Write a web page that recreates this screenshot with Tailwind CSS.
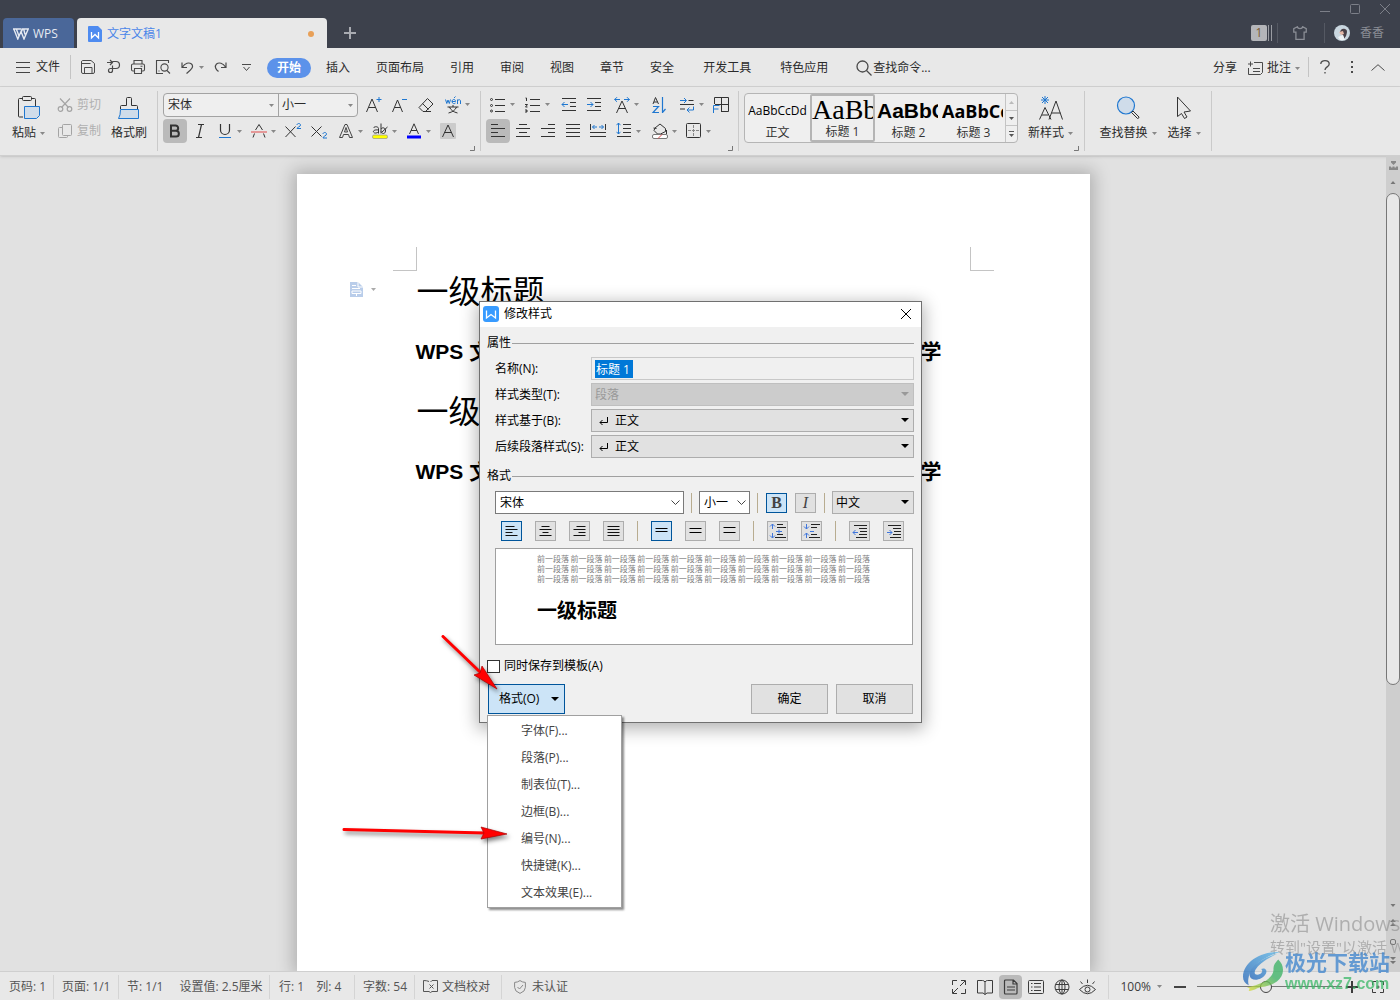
<!DOCTYPE html>
<html lang="zh-CN">
<head>
<meta charset="utf-8">
<title>文字文稿1 - WPS</title>
<script src="https://cdn.jsdelivr.net/npm/@tailwindcss/browser@4"></script>
</head>
<body class="flex h-screen flex-col overflow-hidden bg-[#e1e1e1] font-['Open_Sans','Noto_Sans_CJK_SC',sans-serif] text-xs text-[#2b2b2b]">

<svg class="hidden" aria-hidden="true">
  <symbol id="caret" viewBox="0 0 5 3"><path d="M0 0h5L2.5 3z" fill="currentColor"/></symbol>
  <symbol id="drop" viewBox="0 0 8 4"><path d="M0 0h8L4 4z" fill="currentColor"/></symbol>
  <symbol id="corner" viewBox="0 0 5 5"><path d="M4.500 0v4.500H0" fill="none" stroke="#777"/></symbol>
  <symbol id="plus" viewBox="0 0 12 12"><path d="M6 0v12M0 6h12" stroke="currentColor" stroke-width="2"/></symbol>
</svg>

<!-- Title bar -->
<header class="flex h-12 shrink-0 justify-between bg-[#3d414c]">
  <div class="flex items-end pl-[3px]">
    <button class="flex h-[30px] w-[71px] items-center gap-1 rounded-t bg-[#4a6799] pl-[10px] pt-px text-[#e6eaf2]">
      <svg class="h-3 w-4" viewBox="0 0 16 12" fill="none" stroke="currentColor" stroke-width="1.400"><path d="M0 1h8.500M.8 1l4 10L8 3.500 11 11l4.200-10H9.500l-1 2.500M3.500 1.500L6 8M10.800 1.500l1.200 5"/></svg>
      WPS
    </button>
    <div class="ml-[3px] flex h-[30px] w-[250px] items-center rounded-t bg-[#e8e8e8] pl-[11px] pr-[13px] pt-[2px] text-[#4b86e8]">
      <svg class="h-4 w-[14px]" viewBox="0 0 14 16"><path d="M1 0h9l4 4v11a1 1 0 0 1-1 1H1a1 1 0 0 1-1-1V1a1 1 0 0 1 1-1z" fill="#4e8bf0"/><path d="M3.500 6v6L7 8.500 10.500 12V6" fill="none" stroke="#fff" stroke-width="1.300"/></svg>
      <span class="ml-[5px] grow">文字文稿1</span>
      <span class="size-[6px] rounded-full bg-[#e8a058]"></span>
    </div>
    <button class="mb-[9px] ml-[17px] text-[#a9abb1]" aria-label="新建标签"><svg class="size-3"><use href="#plus"/></svg></button>
  </div>
  <div class="flex flex-col items-end pr-[9px] text-[#7c7f88]">
    <div class="flex h-[18px] items-center gap-5 pr-px">
      <button aria-label="最小化"><svg class="size-[10px]" viewBox="0 0 10 10"><path d="M0 7.500h10" stroke="currentColor"/></svg></button>
      <button aria-label="最大化"><svg class="size-[10px]" viewBox="0 0 10 10"><rect x=".5" y=".5" width="9" height="9" rx="1" fill="none" stroke="currentColor"/></svg></button>
      <button aria-label="关闭"><svg class="size-[10px]" viewBox="0 0 10 10"><path d="M0 0l10 10M10 0L0 10" stroke="currentColor"/></svg></button>
    </div>
    <div class="flex h-[30px] items-center pr-[7px]">
      <span class="flex h-4 w-4 items-center justify-center rounded-xs bg-[#b4b5b9] text-[#7a5a30]">1</span>
      <span class="ml-px h-4 w-1 border-x border-[#9a9ca2]"></span>
      <span class="ml-[5px] h-5 w-px bg-[#555963]"></span>
      <svg class="ml-[15px] size-[14px]" viewBox="0 0 13 13" fill="none" stroke="#8a8d95" stroke-width="1.200"><path d="M4 .7L.7 2.500v3.200h2v6.700h7.600V5.700h2V2.500L9 .7C8.500 3 4.500 3 4 .7z"/></svg>
      <span class="ml-[17px] h-5 w-px bg-[#555963]"></span>
      <svg class="ml-[9px] size-4" viewBox="0 0 16 16"><circle cx="8" cy="8" r="8" fill="#c9d6df"/><path d="M6 8c0-3 2-5 5-4 3 1 2 4 1 7l-2 3-1-4z" fill="#4a4148"/><path d="M5 7l4-1 1 3-3 1z" fill="#e6b9a8"/><path d="M4 12l5-2 2 5-5 0z" fill="#eef2f5"/></svg>
      <span class="ml-[10px] text-[#8a8d95]">香香</span>
    </div>
  </div>
</header>

<!-- Menu bar -->
<nav class="flex h-[39px] shrink-0 items-center border-b border-[#d2d2d2] bg-[#e8e8e8] pl-4">
  <button class="flex items-center gap-[6px]">
    <svg class="h-[11px] w-[14px]" viewBox="0 0 14 11" stroke="#444"><path d="M0 .5h14M0 5.500h14M0 10.500h14"/></svg>文件
  </button>
  <span class="ml-[10px] h-6 w-px bg-[#c4c4c4]"></span>
  <div class="ml-[9px] flex items-center gap-[9px] text-[#4a4a4a]">
    <button aria-label="保存"><svg class="size-4" viewBox="0 0 16 16" fill="none" stroke="currentColor"><path d="M2.500 1.500h8.500l3.500 3v8.500a1.500 1.500 0 0 1-1.500 1.500H3A1.500 1.500 0 0 1 1.500 13V3a1.500 1.500 0 0 1 1-1.500zM4.500 14.500V8.500h7.500v6M2 4.500h8.500"/></svg></button>
    <button aria-label="输出为PDF"><svg class="size-4" viewBox="0 0 16 16" fill="none" stroke="currentColor" stroke-width="1.200"><path d="M2 3.500h5M5 1l2.500 2.500L5 6M7.500 2.500H11a3.500 3.500 0 0 1 0 7H5.500a2 2 0 1 0 2 2V6.500"/></svg></button>
    <button aria-label="打印"><svg class="size-4" viewBox="0 0 16 16" fill="none" stroke="currentColor" stroke-width="1.100"><path d="M4 5V1.500h8V5M4 12H3a1.500 1.500 0 0 1-1.500-1.500v-4A1.500 1.500 0 0 1 3 5h10a1.500 1.500 0 0 1 1.500 1.500v4A1.500 1.500 0 0 1 13 12h-1M4.500 9.500h7v5h-7zM10.500 7.200h2"/></svg></button>
    <button aria-label="打印预览"><svg class="size-4" viewBox="0 0 16 16" fill="none" stroke="currentColor" stroke-width="1.100"><path d="M13.500 4V1.500h-12v13H8"/><circle cx="9.500" cy="8.500" r="3.600"/><path d="M12 11.500l3 3M4 11.500v1"/></svg></button>
    <button class="flex items-center gap-[5px]" aria-label="撤销"><svg class="ml-px size-[13px]" viewBox="0 0 13 13" fill="none" stroke="currentColor" stroke-width="1.200"><path d="M1 1.500v5h5M1.500 6C4 2 8 1 10.500 3c3 3-1 6-5 9.500"/></svg><svg class="h-[3px] w-[5px] text-[#888]"><use href="#caret"/></svg></button>
    <button class="ml-px" aria-label="重做"><svg class="size-[13px]" viewBox="0 0 13 13" fill="none" stroke="currentColor" stroke-width="1.200"><path d="M12 1.500v5H7M11.500 6C9 2 5 1 2.500 3c-2.500 2.500-.5 5.500 2 7.500"/></svg></button>
    <button class="ml-[6px]" aria-label="自定义"><svg class="size-[9px]" viewBox="0 0 9 9" fill="none" stroke="currentColor"><path d="M0 1.500h9M1.500 4l3 3.500 3-3.500"/></svg></button>
  </div>
  <div class="ml-4 flex items-center gap-[26px] whitespace-nowrap pt-[2px]">
    <button class="-mr-[11px] flex h-5 w-11 items-center justify-center rounded-full bg-[#5c92ea] font-bold text-white">开始</button>
    <button>插入</button><button>页面布局</button><button>引用</button><button>审阅</button><button>视图</button><button>章节</button><button>安全</button>
    <button class="ml-[3px]">开发工具</button><button class="ml-[3px]">特色应用</button>
    <button class="ml-[2px] flex items-center gap-px"><svg class="size-4" viewBox="0 0 16 16" fill="none" stroke="#4a4a4a" stroke-width="1.300"><circle cx="6.500" cy="6.500" r="5.500"/><path d="M10.500 10.500l5 5"/></svg>查找命令...</button>
  </div>
  <div class="ml-auto flex items-center whitespace-nowrap pr-[15px]">
    <button class="pt-[2px]">分享</button>
    <button class="ml-[10px] flex items-center gap-1 pt-[2px]"><svg class="size-4" viewBox="0 0 16 16" fill="none" stroke="#4a4a4a"><path d="M7 2.500h8.500v10l-2 2h-12V8M1 4h5M3.500 1.500v5M6 8.500h7M6 11.500h7"/></svg>批注<svg class="h-[3px] w-[5px] text-[#888]"><use href="#caret"/></svg></button>
    <span class="ml-2 h-5 w-px bg-[#c4c4c4]"></span>
    <button class="ml-[11px]" aria-label="帮助"><svg class="h-[14px] w-[10px]" viewBox="0 0 10 14" fill="none" stroke="#4a4a4a" stroke-width="1.300"><path d="M.8 4C.8 1.500 3 .7 5 .7s4.200 1 4.200 3.300C9.200 7 5 6.800 5 10M5 12v1.500"/></svg></button>
    <button class="ml-[21px]" aria-label="更多"><svg class="h-3 w-[2px]" viewBox="0 0 2 12" fill="#4a4a4a"><path d="M0 0h2v2H0zM0 5h2v2H0zM0 10h2v2H0z"/></svg></button>
    <button class="ml-[18px]" aria-label="收起"><svg class="h-[7px] w-[14px]" viewBox="0 0 14 7" fill="none" stroke="#4a4a4a"><path d="M.5 6.500L7 .7l6.500 5.800"/></svg></button>
  </div>
</nav>

<!-- Ribbon -->
<section class="flex h-[69px] shrink-0 border-b border-[#cfcfcf] bg-[#e8e8e8] py-1 shadow-sm whitespace-nowrap">
  <div class="flex w-[158px] shrink-0 border-r border-[#cacaca] pl-3 pt-[5px]">
    <button class="flex flex-col items-center">
      <svg class="h-6 w-6" viewBox="0 0 24 24" fill="none"><path d="M6 2.500H2.500a1 1 0 0 0-1 1V20a1 1 0 0 0 1 1H6M14 2.500h3.500a1 1 0 0 1 1 1V10" stroke="#333"/><rect x="5.500" y=".5" width="9" height="4" rx="1" stroke="#333"/><path d="M7.500 10.500h15v9l-3 3h-12z" fill="#cfdcea" stroke="#1f77d0"/></svg>
      <span class="flex h-[26px] items-center gap-1">粘贴<svg class="h-[3px] w-[5px] text-[#888]"><use href="#caret"/></svg></span>
    </button>
    <div class="ml-3 flex flex-col gap-[10px] pt-px text-[#b0b0b0]">
      <button class="flex items-center gap-1"><svg class="size-4" viewBox="0 0 16 16" fill="none" stroke="#a4a4a4" stroke-width="1.200"><path d="M3 1.500l8.500 9M13 1.500l-8.500 9"/><circle cx="3.500" cy="12" r="2.300"/><circle cx="12.500" cy="12" r="2.300"/></svg>剪切</button>
      <button class="flex items-center gap-1"><svg class="size-4" viewBox="0 0 16 16" fill="none" stroke="#a4a4a4"><rect x="5.500" y="1.500" width="9" height="11" rx="1"/><path d="M5 4.500H2.500a1 1 0 0 0-1 1v8a1 1 0 0 0 1 1h7a1 1 0 0 0 1-1v-1"/></svg>复制</button>
    </div>
    <button class="ml-[10px] flex flex-col items-center">
      <svg class="h-6 w-6" viewBox="0 0 24 24" fill="none"><path d="M3.500 13V10.500a1 1 0 0 1 1-1H9.500v-7a1 1 0 0 1 1-1h3a1 1 0 0 1 1 1v7h5a1 1 0 0 1 1 1V13" stroke="#333"/><path d="M3.500 13.500h18v9h-20q2-3 2-9z" fill="#cfdcea" stroke="#1f77d0"/></svg>
      <span class="flex h-[26px] items-center">格式刷</span>
    </button>
  </div>

  <div class="relative flex w-[323px] shrink-0 flex-col gap-[3px] border-r border-[#cacaca] pl-[5px] pt-[2px]">
    <div class="flex h-[23px] items-center">
      <div class="mr-[3px] flex h-6 w-[195px] rounded border border-[#a3a3a3] bg-[#efefef]">
        <div class="relative w-[115px] border-r border-[#a3a3a3]"><select aria-label="字体" class="h-full w-full appearance-none pl-1 pt-px"><option>宋体</option></select><svg class="pointer-events-none absolute right-1 top-[10px] h-[3px] w-[5px] text-[#888]"><use href="#caret"/></svg></div>
        <div class="relative grow"><select aria-label="字号" class="h-full w-full appearance-none pl-[3px] pt-px"><option>小一</option></select><svg class="pointer-events-none absolute right-1 top-[10px] h-[3px] w-[5px] text-[#888]"><use href="#caret"/></svg></div>
      </div>
      <button class="flex w-[26px] justify-center" aria-label="增大字号"><svg class="size-4" viewBox="0 0 16 16" fill="none"><path d="M.5 15L6 2l5.500 13M2.500 10.500h7" stroke="#333"/><path d="M10.500 2.500h5M13 0v5" stroke="#1f77d0"/></svg></button>
      <button class="flex w-[26px] justify-center" aria-label="减小字号"><svg class="size-4" viewBox="0 0 16 16" fill="none"><path d="M.5 15l5-12 5 12M2.500 10.500h6.500" stroke="#333"/><path d="M10 2.500h5" stroke="#1f77d0"/></svg></button>
      <button class="flex w-[26px] justify-center" aria-label="清除格式"><svg class="size-4" viewBox="0 0 16 16" fill="none" stroke="#333"><path d="M9.500 1.500l5.500 5.500-7.500 7.500H5L1 10.500zM4.500 6.500l6 6M7 14.500h6"/></svg></button>
      <button class="flex w-[34px] items-center gap-1 pl-[6px]" aria-label="拼音指南"><svg class="size-4 overflow-visible" viewBox="0 0 16 16" fill="none"><path d="M.5 2.500L1.800 6.500 3 3l1.300 3.500L5.500 2.500M7 4.500h3.500C10.500 1.500 7 2 7 4.500s3 2.500 3.500 1.500M9 1l1.500-1.500M12.500 7V2.500M12.500 4c1-2 3-1.500 3 0v3" stroke="#1f77d0"/><path d="M2.500 10h11M8 8v2M4.500 10c1 3 4 5 8 6M11.500 10c-1 3-4 5-8 6" stroke="#333"/></svg><svg class="h-[3px] w-[5px] text-[#888]"><use href="#caret"/></svg></button>
    </div>
    <div class="flex h-6 items-center">
      <button class="flex size-6 items-center justify-center rounded bg-[#bababa]" aria-label="加粗"><svg class="size-4" viewBox="0 0 16 16" fill="none" stroke="#333" stroke-width="2"><path d="M4 2.500h4.500a2.500 2.500 0 0 1 0 5.300H4zM4 7.800h5a2.800 2.800 0 0 1 0 5.700H4z"/></svg></button>
      <button class="flex w-[25px] justify-center" aria-label="倾斜"><svg class="size-4" viewBox="0 0 16 16" fill="none" stroke="#333" stroke-width="1.200"><path d="M6 1.500h6M4 14.500h6M9.500 1.500l-3 13"/></svg></button>
      <button class="flex w-[34px] items-center gap-1 pl-[5px]" aria-label="下划线"><svg class="size-4" viewBox="0 0 16 16" fill="none"><path d="M3.500 1v6a4.500 4.500 0 0 0 9 0V1" stroke="#333" stroke-width="1.200"/><path d="M2 14.500h12" stroke="#1f77d0"/></svg><svg class="h-[3px] w-[5px] text-[#888]"><use href="#caret"/></svg></button>
      <button class="flex w-[34px] items-center gap-1 pl-[5px]" aria-label="删除线"><svg class="size-4" viewBox="0 0 16 16" fill="none"><path d="M4.500 7L8 1.500 11.500 7M3.500 10.500L2 14.500M12.500 10.500l1.500 4" stroke="#333"/><path d="M0 9h16" stroke="#e04848"/></svg><svg class="h-[3px] w-[5px] text-[#888]"><use href="#caret"/></svg></button>
      <button class="flex w-[26px] justify-center" aria-label="上标"><svg class="size-4" viewBox="0 0 16 16" fill="none"><path d="M.5 3.500l10 10.500M10.500 3.500L.5 14" stroke="#333"/><path d="M12 2c0-2 3.500-2 3.500 0S12 4 12 5.500h4" stroke="#1f77d0"/></svg></button>
      <button class="flex w-[26px] justify-center" aria-label="下标"><svg class="size-4" viewBox="0 0 16 16" fill="none"><path d="M.5 3.500l10 10M10.500 3.500l-10 10" stroke="#333"/><path d="M12 11c0-2 3.500-2 3.500 0s-3.500 2-3.500 4h4" stroke="#1f77d0"/></svg></button>
      <button class="flex w-[34px] items-center gap-1 pl-[6px]" aria-label="文字效果"><svg class="size-4" viewBox="0 0 16 16" fill="none" stroke="#444"><path d="M1.500 14.500L7 1.500h2l5.500 13h-3l-1-3h-5l-1 3zM6.500 9h3L8 4.500z"/></svg><svg class="h-[3px] w-[5px] text-[#888]"><use href="#caret"/></svg></button>
      <button class="flex w-[34px] items-center gap-1 pl-[6px]" aria-label="突出显示"><svg class="size-4" viewBox="0 0 16 16" fill="none"><rect x=".5" y="12" width="15" height="3.500" rx="1.500" fill="#ff0" stroke="#888" stroke-width=".6"/><path d="M1.500 5c1-2 5-1.500 5 .5v5M6.500 7C3 6.500 1 7.500 1.500 9s4 1.500 5-.5M9 .5v10M9 6c1-2 5-1.500 4.500 2S10 11 9 8.500M10 9l5.500-5" stroke="#333"/></svg><svg class="h-[3px] w-[5px] text-[#888]"><use href="#caret"/></svg></button>
      <button class="flex w-[34px] items-center gap-1 pl-[6px]" aria-label="字体颜色"><svg class="size-4" viewBox="0 0 16 16" fill="none"><path d="M3.500 11L8 .8 12.500 11M5 7.500h6" stroke="#333"/><path d="M1 14h14" stroke="#00f" stroke-width="3"/></svg><svg class="h-[3px] w-[5px] text-[#888]"><use href="#caret"/></svg></button>
      <button class="flex w-7 justify-center" aria-label="字符底纹"><svg class="size-4" viewBox="0 0 16 16" fill="none"><rect width="16" height="16" rx="1" fill="#cbcbcb"/><path d="M2.500 14L8 2l5.500 12M4.500 9.500h7" stroke="#333"/></svg></button>
    </div>
    <svg class="absolute bottom-0 right-[5px] size-[5px]"><use href="#corner"/></svg>
  </div>

  <div class="relative flex w-[258px] shrink-0 flex-col gap-[3px] border-r border-[#cacaca] pl-[5px] pt-[2px]">
    <div class="flex h-[23px] items-center gap-px">
      <button class="flex w-[34px] items-center gap-1 pl-1" aria-label="项目符号"><svg class="size-4" viewBox="0 0 16 16" fill="none" stroke="#333"><path d="M5 2.500h10M5 8.500h10M5 14.500h10"/><circle cx="1.500" cy="2.500" r="1"/><circle cx="1.500" cy="8.500" r="1"/><circle cx="1.500" cy="14" r="1"/></svg><svg class="h-[3px] w-[5px] text-[#888]"><use href="#caret"/></svg></button>
      <button class="flex w-[34px] items-center gap-1 pl-1" aria-label="编号"><svg class="size-4" viewBox="0 0 16 16" fill="none" stroke="#333"><path d="M5 2.500h10M5 8.500h10M5 14.500h10M.5 1h1v3M0 7.500h2.500L.5 10h2M0 13h2v2H0M1 14h1"/></svg><svg class="h-[3px] w-[5px] text-[#888]"><use href="#caret"/></svg></button>
      <button class="ml-px flex w-6 justify-center" aria-label="减少缩进"><svg class="size-4" viewBox="0 0 16 16" fill="none" stroke="#333"><path d="M1 1.500h14M9 5.500h6M9 9.500h6M1 13.500h14"/><path d="M1 7.500h6M3.500 5L1 7.500 3.500 10" stroke="#1f77d0"/></svg></button>
      <button class="flex w-6 justify-center" aria-label="增加缩进"><svg class="size-4" viewBox="0 0 16 16" fill="none" stroke="#333"><path d="M1 1.500h14M9 5.500h6M9 9.500h6M1 13.500h14"/><path d="M1 7.500h6M4.500 5L7 7.500 4.500 10" stroke="#1f77d0"/></svg></button>
      <button class="ml-[2px] flex w-[34px] items-center gap-1 pl-[5px]" aria-label="中文版式"><svg class="size-4" viewBox="0 0 16 16" fill="none" stroke="#333"><path d="M2.500 16L8 4l5.500 12M4.500 11.500h7"/><path d="M.5 2.500H6M3 .2L.7 2.500 3 4.800M10 2.500h5.500M13 .2l2.300 2.300L13 4.800" stroke="#1f77d0"/></svg><svg class="h-[3px] w-[5px] text-[#888]"><use href="#caret"/></svg></button>
      <button class="ml-[3px] flex w-6 justify-center" aria-label="排序"><svg class="size-4" viewBox="0 0 16 16" fill="none"><path d="M2 7l2.500-6.500L7.500 7M3 5h3.500" stroke="#333"/><path d="M2 9.500h5.500L2 15.500h6M11.500 0v15.500l3-3.500" stroke="#1f77d0" stroke-width="1.200"/></svg></button>
      <button class="ml-[2px] flex w-[34px] items-center gap-1 pl-[5px]" aria-label="制表符"><svg class="size-4" viewBox="0 0 16 16" fill="none" stroke="#333"><path d="M9.500 3.500h5M1 7.500h14M1 12h5"/><path d="M1 3.500h6M5 1l2.500 2.500L5 6M14.500 9.500V13H8.500M10.500 10.500L8 13l2.500 2.500" stroke="#1f77d0"/></svg><svg class="h-[3px] w-[5px] text-[#888]"><use href="#caret"/></svg></button>
      <button class="flex w-6 justify-center" aria-label="文字工具"><svg class="size-4" viewBox="0 0 16 16" fill="none" stroke="#333"><path d="M1.500 7V.5h14v14H8M8.500 1v13M2 7.500h13"/><path d="M.5 16V8.500h6M1 12h4.500" stroke="#1f77d0"/></svg></button>
    </div>
    <div class="flex h-6 items-center gap-px">
      <button class="flex size-6 items-center justify-center rounded bg-[#bababa]" aria-label="左对齐"><svg class="size-4" viewBox="0 0 16 16" stroke="#333"><path d="M1 1.500h7M1 5.500h14M1 9.500h7M1 13.500h14"/></svg></button>
      <button class="flex w-6 justify-center" aria-label="居中"><svg class="size-4" viewBox="0 0 16 16" stroke="#333"><path d="M4 1.500h8M1 5.500h14M4 9.500h8M1 13.500h14"/></svg></button>
      <button class="flex w-6 justify-center" aria-label="右对齐"><svg class="size-4" viewBox="0 0 16 16" stroke="#333"><path d="M8 1.500h7M1 5.500h14M8 9.500h7M1 13.500h14"/></svg></button>
      <button class="flex w-6 justify-center" aria-label="两端对齐"><svg class="size-4" viewBox="0 0 16 16" stroke="#333"><path d="M1 1.500h14M1 5.500h14M1 9.500h14M1 13.500h14"/></svg></button>
      <button class="flex w-6 justify-center" aria-label="分散对齐"><svg class="size-4" viewBox="0 0 16 16" fill="none" stroke="#333"><path d="M.5 1v6M15.500 1v6M0 9.500h16M0 13.500h16"/><path d="M2.500 4H7M4.500 2l-2 2 2 2M9 4h4.500M11.500 2l2 2-2 2" stroke="#1f77d0"/></svg></button>
      <button class="flex w-[34px] items-center gap-1 pl-[5px]" aria-label="行距"><svg class="size-4" viewBox="0 0 16 16" fill="none" stroke="#333"><path d="M7 1.500h8M7 5.500h8M7 9.500h8M1 13.500h14"/><path d="M2.500 0v11M.5 2.200L2.500 0l2 2.200M.5 8.800l2 2.200 2-2.200" stroke="#1f77d0"/></svg><svg class="h-[3px] w-[5px] text-[#888]"><use href="#caret"/></svg></button>
      <button class="flex w-[34px] items-center gap-1 pl-[6px]" aria-label="底纹颜色"><svg class="size-4" viewBox="0 0 16 16" fill="none" stroke="#333"><path d="M3 5l5-4 5.500 4.500v3L8.500 11h-3L2 7.500zM1.500 5l3 .5M14.500 7v4"/><rect x=".5" y="11.500" width="15" height="4" rx="1.500" fill="#fff" stroke="#777"/><path d="M6 15.500l4-4" stroke="#e04848"/></svg><svg class="h-[3px] w-[5px] text-[#888]"><use href="#caret"/></svg></button>
      <button class="flex w-[34px] items-center gap-1 pl-[5px]" aria-label="边框"><svg class="size-4" viewBox="0 0 16 16" fill="none" stroke="#333"><rect x=".5" y=".5" width="14" height="14" rx="1"/><path d="M7.500 2v12M2 7.500h12" stroke="#888" stroke-dasharray="3 1"/></svg><svg class="h-[3px] w-[5px] text-[#888]"><use href="#caret"/></svg></button>
    </div>
    <svg class="absolute bottom-0 right-[5px] size-[5px]"><use href="#corner"/></svg>
  </div>

  <div class="relative flex w-[346px] shrink-0 border-r border-[#cacaca] pl-[5px] pt-[2px]">
    <div class="flex h-[50px] w-[274px] overflow-hidden rounded border border-[#b5b5b5] bg-[#efefef] text-black">
      <button class="flex w-[65px] flex-col items-center justify-end overflow-hidden"><span class="font-['Open_Sans'] leading-5">AaBbCcDd</span><span class="mt-[3px] leading-[18px] text-[#333]">正文</span></button>
      <button class="flex w-[65px] flex-col items-start justify-end overflow-hidden rounded-xs border-2 border-[#b5b5b5]"><span class="w-[61px] overflow-hidden text-left font-['Liberation_Serif'] text-[28px] leading-7">AaBb</span><span class="self-center leading-4 text-[#333]">标题 1</span></button>
      <button class="flex w-[65px] flex-col items-start justify-end overflow-hidden pl-[2px]"><span class="w-[61px] overflow-hidden text-left font-['Liberation_Sans'] text-[21px] font-bold leading-6">AaBbC</span><span class="mt-px self-center leading-[18px] text-[#333]">标题 2</span></button>
      <button class="flex w-[65px] flex-col items-start justify-end overflow-hidden pl-[2px]"><span class="w-[61px] overflow-hidden text-left font-['Open_Sans'] text-[18px] font-bold leading-6">AaBbCc</span><span class="mt-px self-center leading-[18px] text-[#333]">标题 3</span></button>
      <div class="flex w-3 flex-col border-l border-[#c4c4c4] text-[#555]">
        <button class="flex h-4 items-center justify-center text-[#bbb]" aria-label="上一行"><svg class="h-[3px] w-[5px] rotate-180"><use href="#caret"/></svg></button>
        <button class="flex h-4 items-center justify-center border-y border-[#c4c4c4]" aria-label="下一行"><svg class="h-[3px] w-[5px]"><use href="#caret"/></svg></button>
        <button class="flex h-4 flex-col items-center justify-center gap-[2px]" aria-label="全部样式"><span class="h-px w-[5px] bg-[#555]"></span><svg class="h-[3px] w-[5px]"><use href="#caret"/></svg></button>
      </div>
    </div>
    <button class="ml-[10px] flex flex-col items-center pt-[3px]">
      <svg class="h-6 w-6" viewBox="0 0 24 24" fill="none" stroke="#333"><path d="M.5 23.500L6 11.500l6 12M3 19h6M10 23.500L17 5l6.500 18.500M12.500 17h9"/><path d="M6 0v8M2 4h8M3 1l6 6M9 1L3 7" stroke="#1f77d0"/></svg>
      <span class="flex h-[26px] items-center gap-1">新样式<svg class="h-[3px] w-[5px] text-[#888]"><use href="#caret"/></svg></span>
    </button>
    <svg class="absolute bottom-0 right-[5px] size-[5px]"><use href="#corner"/></svg>
  </div>

  <div class="flex w-[127px] shrink-0 justify-center gap-[11px] border-r border-[#cacaca] pl-1 pt-[5px]">
    <button class="flex flex-col items-center">
      <svg class="h-6 w-6" viewBox="0 0 24 24" fill="none"><circle cx="10" cy="9.500" r="8.500" fill="#cfdcea" stroke="#1f77d0" stroke-width="1.200"/><path d="M15.500 16.500l1.500-1.500 6 6q0 1.500-1.500 1.500z" stroke="#333"/></svg>
      <span class="flex h-[26px] items-center gap-1">查找替换<svg class="h-[3px] w-[5px] text-[#888]"><use href="#caret"/></svg></span>
    </button>
    <button class="flex flex-col items-center">
      <svg class="h-6 w-6" viewBox="0 0 24 24" fill="none" stroke="#333"><path d="M5.500 1v19.500l4-3 3 5 2.500-1.500-3-5 6.500-1z"/></svg>
      <span class="flex h-[26px] items-center gap-1">选择<svg class="h-[3px] w-[5px] text-[#888]"><use href="#caret"/></svg></span>
    </button>
  </div>
</section>

<!-- Document area -->
<main class="relative flex min-h-0 grow">
  <div class="min-w-0 grow overflow-hidden pt-[18px]">
    <article class="mx-auto h-full w-[793px] bg-white px-24 pt-[73px] text-black shadow-[0_0_16px_4px_rgba(0,0,0,0.22)]">
      <div class="flex justify-between">
        <span class="size-6 border-b border-r border-[#c4c4c4]"></span>
        <span class="size-6 border-b border-l border-[#c4c4c4]"></span>
      </div>
      <div class="relative pl-6">
        <button class="absolute -left-[43px] top-[11px] flex items-center gap-2" aria-label="段落选项">
          <svg class="h-[15px] w-[13px]" viewBox="0 0 13 15"><path d="M0 0h8l5 5v10H0z" fill="#b9cdea"/><path d="M8 0v5h5M2 3.500h4M2 6.500h8M2 9h9v2.500H2zM6.500 12v2" fill="none" stroke="#fff"/></svg>
          <svg class="h-[3px] w-[5px] text-[#aaa]"><use href="#caret"/></svg>
        </button>
        <h1 class="h-[60px] pt-1 text-[32px] leading-8">一级标题</h1>
        <h2 class="-ml-px flex h-[60px] w-[526px] justify-between pt-[9px] font-['Liberation_Sans','Noto_Sans_CJK_SC',sans-serif] text-[21px] font-bold leading-6"><span>WPS 文</span><span>学</span></h2>
        <h1 class="h-[60px] pt-1 text-[32px] leading-8">一级标题</h1>
        <h2 class="-ml-px flex h-[60px] w-[526px] justify-between pt-[9px] font-['Liberation_Sans','Noto_Sans_CJK_SC',sans-serif] text-[21px] font-bold leading-6"><span>WPS 文</span><span>学</span></h2>
      </div>
    </article>
  </div>
  <aside class="flex w-[14px] shrink-0 flex-col items-center bg-[#cecece] text-[#777]">
    <svg class="mt-[5px] h-[9px] w-[9px]" viewBox="0 0 9 9" fill="#888"><path d="M2 0h5v1.500L4.500 4 2 1.500zM0 5.500h2v1h1.500v-1h2v1H7v-1h2V9H0z"/></svg>
    <svg class="mt-[11px] h-[3px] w-[6px] rotate-180"><use href="#caret"/></svg>
    <div class="mt-[9px] h-[492px] w-full rounded-full border border-[#777] bg-[#e8e8e8]"></div>
    <div class="mb-[7px] mt-auto flex flex-col items-center">
      <svg class="h-[3px] w-[6px]"><use href="#caret"/></svg>
      <svg class="mt-3 h-[7px] w-[6px]" viewBox="0 0 6 7" fill="currentColor"><path d="M3 0l3 3H0zM3 4l3 3H0z"/></svg>
      <span class="mt-[13px] size-[6px] rounded-xs border border-[#777]"></span>
      <svg class="mt-3 h-[7px] w-[6px]" viewBox="0 0 6 7" fill="currentColor"><path d="M3 3l3-3H0zM3 7l3-3H0z"/></svg>
    </div>
  </aside>

  <!-- Modify-style dialog -->
  <div role="dialog" aria-labelledby="dlg-title" class="absolute left-1/2 top-[145px] -ml-[221px] w-[443px] border border-[#707070] bg-[#f0f0f0] pb-2 text-black shadow-[0_4px_16px_2px_rgba(0,0,0,0.3)]">
    <div class="flex h-[25px] items-center bg-white pb-px pl-[3px] pr-[10px]">
      <svg class="size-4" viewBox="0 0 16 16"><rect width="16" height="16" rx="3" fill="#389bff"/><path d="M3.500 4.500v7.500L8 8.500l4.500 3.500V4.500" fill="none" stroke="#fff" stroke-width="1.300"/></svg>
      <span id="dlg-title" class="ml-[5px] grow">修改样式</span>
      <button aria-label="关闭"><svg class="size-[10px]" viewBox="0 0 10 10"><path d="M0 0l10 10M10 0L0 10" stroke="#000"/></svg></button>
    </div>
    <div class="flex flex-col pl-[7px] pr-[7px] pt-[6px]">
      <div class="flex h-5 items-center gap-px">属性<span class="h-px grow bg-[#a0a0a0]"></span></div>
      <div class="mt-1 grid grid-cols-[96px_1fr] items-center gap-y-[3px] pl-2 whitespace-nowrap">
        <label for="f-name">名称(N):</label>
        <div class="flex h-[23px] items-center border border-[#c8c8c8] p-px">
          <input id="f-name" value="标题 1" class="ml-[2px] h-[18px] w-[38px] bg-[#0078d7] pl-px text-white outline-none">
        </div>
        <label for="f-type">样式类型(T):</label>
        <div class="relative h-[23px]"><select id="f-type" disabled class="h-full w-full appearance-none border border-[#bfbfbf] bg-[#cccccc] pl-[3px] text-[#9a9a9a] opacity-100"><option>段落</option></select><svg class="pointer-events-none absolute right-[5px] top-[9px] h-1 w-2 text-[#999]"><use href="#drop"/></svg></div>
        <label for="f-base">样式基于(B):</label>
        <div class="relative h-[23px]"><select id="f-base" class="h-full w-full appearance-none border border-[#adadad] bg-[#e1e1e1] pl-[23px]"><option>正文</option></select><svg class="pointer-events-none absolute left-2 top-2 size-[9px]" viewBox="0 0 9 9" fill="none" stroke="#000"><path d="M8.500 0v5.500H1M3.500 3L1 5.500 3.500 8"/></svg><svg class="pointer-events-none absolute right-[5px] top-[9px] h-1 w-2"><use href="#drop"/></svg></div>
        <label for="f-next">后续段落样式(S):</label>
        <div class="relative h-[23px]"><select id="f-next" class="h-full w-full appearance-none border border-[#adadad] bg-[#e1e1e1] pl-[23px]"><option>正文</option></select><svg class="pointer-events-none absolute left-2 top-2 size-[9px]" viewBox="0 0 9 9" fill="none" stroke="#000"><path d="M8.500 0v5.500H1M3.500 3L1 5.500 3.500 8"/></svg><svg class="pointer-events-none absolute right-[5px] top-[9px] h-1 w-2"><use href="#drop"/></svg></div>
      </div>
      <div class="mt-2 flex h-5 items-center gap-px">格式<span class="h-px grow bg-[#a0a0a0]"></span></div>
      <div class="mt-[5px] flex items-center pl-2">
        <div class="relative h-[23px] w-[189px]"><select aria-label="字体" class="h-full w-full appearance-none border border-[#7a7a7a] bg-white pl-1"><option>宋体</option></select><svg class="pointer-events-none absolute right-1 top-[9px] h-[6px] w-[9px]" viewBox="0 0 9 6" fill="none" stroke="#444"><path d="M.5.5l4 4 4-4"/></svg></div>
        <span class="ml-[7px] h-5 w-px bg-[#b8ac90]"></span>
        <div class="relative ml-[7px] h-[23px] w-[51px]"><select aria-label="字号" class="h-full w-full appearance-none border border-[#7a7a7a] bg-white pl-1"><option>小一</option></select><svg class="pointer-events-none absolute right-1 top-[9px] h-[6px] w-[9px]" viewBox="0 0 9 6" fill="none" stroke="#444"><path d="M.5.5l4 4 4-4"/></svg></div>
        <span class="ml-[7px] h-5 w-px bg-[#b8ac90]"></span>
        <button class="ml-2 h-5 w-[21px] border border-[#00559b] bg-[#cce4f7] font-['Liberation_Serif'] text-base font-bold leading-4 text-[#444]">B</button>
        <button class="ml-2 h-5 w-[21px] border border-[#adadad] bg-[#e1e1e1] font-['Liberation_Serif'] text-base italic leading-4 text-[#444]">I</button>
        <span class="ml-2 h-5 w-px bg-[#b8ac90]"></span>
        <div class="relative ml-[7px] h-[23px] grow"><select aria-label="语言" class="h-full w-full appearance-none border border-[#adadad] bg-[#e1e1e1] pl-[3px]"><option>中文</option></select><svg class="pointer-events-none absolute right-[5px] top-[9px] h-1 w-2"><use href="#drop"/></svg></div>
      </div>
      <div class="mt-[7px] flex items-center gap-[13px] pl-[14px]">
        <button class="flex h-5 w-[21px] items-center justify-center border border-[#00559b] bg-[#cce4f7]" aria-label="左对齐"><svg class="h-[14px] w-[13px]" viewBox="0 0 13 14" stroke="#111"><path d="M.5 2.500h9M.5 5.500h12M.5 8.500h7M.5 11.500h12"/></svg></button>
        <button class="flex h-5 w-[21px] items-center justify-center border border-[#adadad] bg-[#e1e1e1]" aria-label="居中"><svg class="h-[14px] w-[13px]" viewBox="0 0 13 14" stroke="#111"><path d="M2.500 2.500h8M.5 5.500h12M3.500 8.500h6M.5 11.500h12"/></svg></button>
        <button class="flex h-5 w-[21px] items-center justify-center border border-[#adadad] bg-[#e1e1e1]" aria-label="右对齐"><svg class="h-[14px] w-[13px]" viewBox="0 0 13 14" stroke="#111"><path d="M3.500 2.500h9M.5 5.500h12M5.500 8.500h7M.5 11.500h12"/></svg></button>
        <button class="flex h-5 w-[21px] items-center justify-center border border-[#adadad] bg-[#e1e1e1]" aria-label="两端对齐"><svg class="h-[14px] w-[13px]" viewBox="0 0 13 14" stroke="#111"><path d="M.5 2.500h12M.5 5.500h12M.5 8.500h12M.5 11.500h12"/></svg></button>
        <span class="h-5 w-px bg-[#b8ac90]"></span>
        <button class="flex h-5 w-[21px] items-center justify-center border border-[#00559b] bg-[#cce4f7]" aria-label="单倍行距"><svg class="h-[14px] w-[13px]" viewBox="0 0 13 14" stroke="#000"><path d="M.5 4.500h12M.5 7.500h12"/></svg></button>
        <button class="flex h-5 w-[21px] items-center justify-center border border-[#adadad] bg-[#e1e1e1]" aria-label="1.5倍行距"><svg class="h-[14px] w-[13px]" viewBox="0 0 13 14" stroke="#000"><path d="M.5 4.500h12M.5 8.500h12"/></svg></button>
        <button class="flex h-5 w-[21px] items-center justify-center border border-[#adadad] bg-[#e1e1e1]" aria-label="两倍行距"><svg class="h-[14px] w-[13px]" viewBox="0 0 13 14" stroke="#000"><path d="M.5 3.500h12M.5 8.500h12"/></svg></button>
        <span class="h-5 w-px bg-[#b8ac90]"></span>
        <button class="flex h-5 w-[21px] items-center justify-center border border-[#adadad] bg-[#e1e1e1]" aria-label="增大段间距"><svg class="h-4 w-[17px]" viewBox="0 0 17 16" fill="none" stroke="#222"><path d="M8 1.500h6M8 4.500h9M8 11.500h6M6 14.500h11"/><path d="M3.500 1v5M1 3.500L3.500 1 6 3.500M3.500 10v5M1 12.500L3.500 15 6 12.500M7 8.500h6M10 6.500v4" stroke="#3f76dc"/></svg></button>
        <button class="flex h-5 w-[21px] items-center justify-center border border-[#adadad] bg-[#e1e1e1]" aria-label="减小段间距"><svg class="h-4 w-[17px]" viewBox="0 0 17 16" fill="none" stroke="#222"><path d="M8 1.500h9M8 4.500h6M8 11.500h6M6 14.500h11"/><path d="M3.500 1v5M1 3.500L3.500 6 6 3.500M3.500 10v5M1 12.500L3.500 10 6 12.500M7 8.500h4" stroke="#3f76dc"/></svg></button>
        <span class="h-5 w-px bg-[#b8ac90]"></span>
        <button class="flex h-5 w-[21px] items-center justify-center border border-[#adadad] bg-[#e1e1e1]" aria-label="减少缩进"><svg class="h-4 w-[15px]" viewBox="0 0 15 16" fill="none" stroke="#222"><path d="M2 2.500h13M7 5.500h8M8 8.500h7M7 11.500h8M4 14.500h11"/><path d="M1 9.500h5M3.500 7L1 9.500 3.500 12" stroke="#3f76dc"/></svg></button>
        <button class="flex h-5 w-[21px] items-center justify-center border border-[#adadad] bg-[#e1e1e1]" aria-label="增加缩进"><svg class="h-4 w-[15px]" viewBox="0 0 15 16" fill="none" stroke="#222"><path d="M2 2.500h13M7 5.500h8M8 8.500h7M7 11.500h8M4 14.500h11"/><path d="M1 9.500h5M3.500 7L6 9.500 3.500 12" stroke="#3f76dc"/></svg></button>
      </div>
      <div class="ml-2 mr-px mt-[7px] h-[97px] border border-[#a0a0a0] bg-white pl-[41px] pr-[42px] pt-[5px]">
        <div class="flex flex-col text-[8px] leading-[10px] text-[#808080]">
          <p class="flex justify-between"><span>前一段落</span><span>前一段落</span><span>前一段落</span><span>前一段落</span><span>前一段落</span><span>前一段落</span><span>前一段落</span><span>前一段落</span><span>前一段落</span><span>前一段落</span></p>
          <p class="flex justify-between"><span>前一段落</span><span>前一段落</span><span>前一段落</span><span>前一段落</span><span>前一段落</span><span>前一段落</span><span>前一段落</span><span>前一段落</span><span>前一段落</span><span>前一段落</span></p>
          <p class="flex justify-between"><span>前一段落</span><span>前一段落</span><span>前一段落</span><span>前一段落</span><span>前一段落</span><span>前一段落</span><span>前一段落</span><span>前一段落</span><span>前一段落</span><span>前一段落</span></p>
        </div>
        <p class="mt-[13px] text-xl font-bold leading-7">一级标题</p>
      </div>
      <label class="mt-[11px] flex h-5 items-center gap-1"><input type="checkbox" class="size-[13px] appearance-none border border-[#333] bg-white">同时保存到模板(A)</label>
      <div class="mt-2 flex gap-2 pl-px pr-px">
        <button class="mr-auto flex h-[30px] w-[77px] items-center justify-between border border-[#00559b] bg-[#cce4f7] pl-[10px] pr-[5px]">格式(O)<svg class="h-1 w-2"><use href="#drop"/></svg></button>
        <button class="h-[30px] w-[77px] border border-[#adadad] bg-[#e1e1e1]">确定</button>
        <button class="h-[30px] w-[77px] border border-[#adadad] bg-[#e1e1e1]">取消</button>
      </div>
    </div>

    <div role="menu" class="absolute left-[7px] top-[413px] flex w-[135px] flex-col border border-[#a0a0a0] bg-white py-px text-[#444] shadow-[2px_2px_2px_rgba(0,0,0,0.45)]">
      <button role="menuitem" class="h-[27px] pl-[33px] text-left">字体(F)...</button>
      <button role="menuitem" class="h-[27px] pl-[33px] text-left">段落(P)...</button>
      <button role="menuitem" class="h-[27px] pl-[33px] text-left">制表位(T)...</button>
      <button role="menuitem" class="h-[27px] pl-[33px] text-left">边框(B)...</button>
      <button role="menuitem" class="h-[27px] pl-[33px] text-left">编号(N)...</button>
      <button role="menuitem" class="h-[27px] pl-[33px] text-left">快捷键(K)...</button>
      <button role="menuitem" class="h-[27px] pl-[33px] text-left">文本效果(E)...</button>
    </div>

    <!-- Pointer arrows -->
    <svg class="pointer-events-none absolute -left-[140px] top-[328px] h-[220px] w-[180px] drop-shadow-[2px_3px_2px_rgba(0,0,0,0.5)]" viewBox="340 630 180 220" fill="#f00" stroke="#f00">
      <path d="M443 636.500L480 672" stroke-width="3" stroke-linecap="round"/><path d="M497 689l-23-14 6-2 2-7z" stroke="#a00" stroke-width=".7"/>
      <path d="M344 829.500L485 833" stroke-width="3" stroke-linecap="round"/><path d="M507 834l-26 5 3-6-3-6z" stroke="#a00" stroke-width=".7"/>
    </svg>
  </div>
</main>

<!-- Status bar -->
<footer class="flex h-[29px] shrink-0 items-center border-t border-[#cfcfcf] bg-[#e8e8e8] pl-[9px] pr-4 pt-px whitespace-nowrap text-[#555]">
  <span class="w-11">页码: 1</span>
  <span class="flex h-6 w-[65px] items-center border-l border-[#d4d4d4] pl-2">页面: 1/1</span>
  <span class="flex h-6 w-[151px] items-center gap-4 border-l border-[#d4d4d4] pl-2"><span>节: 1/1</span><span>设置值: 2.5厘米</span></span>
  <span class="flex h-6 w-[85px] items-center gap-3 border-l border-[#d4d4d4] pl-[9px]"><span>行: 1</span><span>列: 4</span></span>
  <span class="flex h-6 w-[60px] items-center border-l border-[#d4d4d4] pl-2">字数: 54</span>
  <button class="flex h-6 w-[87px] items-center gap-1 border-l border-[#d4d4d4] pl-2"><svg class="h-[13px] w-[15px]" viewBox="0 0 15 13" fill="none" stroke="#555"><path d="M6 1.500q-2-1-5.500-1v11h5.500l1.500 1 1.500-1h5.500V.5H9L7.500 2M6.500 4.500l4 4M10.500 4.500l-4 4"/></svg>文档校对</button>
  <button class="flex h-6 items-center gap-[6px] border-l border-[#d4d4d4] pl-3"><svg class="h-[14px] w-3" viewBox="0 0 12 14" fill="none" stroke="#888"><path d="M6 .6q2.500 1.800 5.400 1.800v5q0 4-5.400 6Q.6 11.400.6 7.400v-5Q3.500 2.400 6 .6zM3.500 7l2 2 3.500-4"/></svg>未认证</button>
  <div class="ml-auto flex items-center text-[#3c3c3c]">
    <button aria-label="全屏"><svg class="size-4" viewBox="0 0 16 16" fill="none" stroke="currentColor"><path d="M1.500 6V1.500H6M10 1.500h4.500V6M14.500 10v4.500H10M6 14.500H1.500V10M9 7l5-5M7 9l-5 5"/></svg></button>
    <button class="ml-[10px]" aria-label="阅读"><svg class="size-4" viewBox="0 0 16 16" fill="none" stroke="currentColor"><path d="M8 3v12.500M8 3Q7 1.500 5.500 1.500h-5v12.500h5.500L8 15.500 10 14h5.500V1.500h-5Q9 1.500 8 3z"/></svg></button>
    <button class="ml-[6px] flex h-6 w-[23px] items-center justify-center rounded bg-[#bababa]" aria-label="页面视图"><svg class="size-4" viewBox="0 0 16 16" fill="none" stroke="currentColor" stroke-width="1.200"><path d="M2.500 1h8l3.500 3.500V14a1 1 0 0 1-1 1H2.500a1 1 0 0 1-1-1V2a1 1 0 0 1 1-1zM10 1v4h4M4 8h8M4 11h8"/></svg></button>
    <button class="ml-[6px]" aria-label="大纲"><svg class="size-4" viewBox="0 0 16 16" fill="none" stroke="currentColor"><rect x=".5" y="1.500" width="15" height="13" rx="1"/><path d="M3 4.500h1.500M6 4.500h7M3 8h1.500M6 8h7M3 11.500h1.500M6 11.500h7"/></svg></button>
    <button class="ml-[10px]" aria-label="Web版式"><svg class="size-4" viewBox="0 0 16 16" fill="none" stroke="currentColor"><circle cx="8" cy="8" r="7"/><ellipse cx="8" cy="8" rx="3" ry="7"/><path d="M8 1v14M1.500 5.500h13M1.500 10.500h13"/></svg></button>
    <button class="ml-[9px]" aria-label="护眼模式"><svg class="h-4 w-[17px]" viewBox="0 0 17 16" fill="none" stroke="currentColor"><path d="M.5 10.500q8-8.500 16 0-8 8.500-16 0zM8.500 4V.5M3.500 5L1.500 2.500M13.500 5l2-2.500"/><circle cx="8.500" cy="10.500" r="2.500"/></svg></button>
    <span class="ml-3 h-6 w-px bg-[#d4d4d4]"></span>
    <button class="ml-[11px] flex items-center gap-[6px]">100%<svg class="h-[3px] w-[5px] text-[#888]"><use href="#caret"/></svg></button>
    <button class="ml-3" aria-label="缩小"><svg class="h-[2px] w-3"><rect width="12" height="2" fill="#444"/></svg></button>
    <input type="range" aria-label="缩放" min="0" max="100" value="47" class="ml-[11px] h-3 w-[145px] appearance-none bg-[linear-gradient(#777,#777)] bg-[length:100%_1px] bg-center bg-no-repeat [&::-webkit-slider-thumb]:size-3 [&::-webkit-slider-thumb]:appearance-none [&::-webkit-slider-thumb]:rounded-full [&::-webkit-slider-thumb]:border [&::-webkit-slider-thumb]:border-[#444] [&::-webkit-slider-thumb]:bg-[#e8e8e8]">
    <button class="ml-1" aria-label="放大"><svg class="size-3"><use href="#plus"/></svg></button>
    <button class="ml-[14px]" aria-label="适应窗口"><svg class="size-3" viewBox="0 0 12 12" fill="none" stroke="currentColor"><path d="M.5 4V.5H4M8 .5h3.500V4M11.500 8v3.500H8M4 11.500H.5V8M6 4.500v3M4.500 6h3"/></svg></button>
  </div>
</footer>

<!-- Watermarks over the lower right corner -->
<div class="pointer-events-none fixed bottom-[42px] right-0 w-[130px] overflow-hidden whitespace-nowrap text-[#8c8c8c]/60">
  <p class="text-xl leading-6">激活 Windows</p>
  <p class="text-[15px] leading-[22px]">转到"设置"以激活 Windows。</p>
</div>
<div class="pointer-events-none fixed bottom-[7px] right-[10px] flex items-center gap-px whitespace-nowrap opacity-75">
  <svg class="h-10 w-[42px]" viewBox="0 0 42 42"><defs><linearGradient id="swirl-blue" x1="0" y1="1" x2="1" y2="0"><stop stop-color="#1f62b8"/><stop offset="1" stop-color="#59b8ea"/></linearGradient><linearGradient id="swirl-green" x1="0" y1="1" x2="1" y2="0"><stop stop-color="#e0dc30"/><stop offset=".6" stop-color="#36b060"/></linearGradient></defs><path d="M39 1C18 0 0 12 0 27c0 4 2 7 6 9C3 22 15 8 39 1z" fill="url(#swirl-blue)"/><path d="M36 3C18 8 6 18 7 26c1 6 12 6 17-2 2-4-1-7-5-5 3 2 0 6-4 6-6 0-3-11 21-22z" fill="url(#swirl-blue)"/><path d="M37 9c-3 3-5 6-5 9 1 9-10 17-28 20l3 1-1 3c6-1 9-3 12-4 15-1 24-9 24-18 0-5-2-8-5-11z" fill="url(#swirl-green)"/></svg>
  <div>
    <p class="text-[21px] font-bold leading-[26px] text-[#3a82cc]">极光下载站</p>
    <p class="font-['Liberation_Sans'] text-base font-bold leading-[18px] text-[#3cb868]">www.xz7.com</p>
  </div>
</div>
</body>
</html>
